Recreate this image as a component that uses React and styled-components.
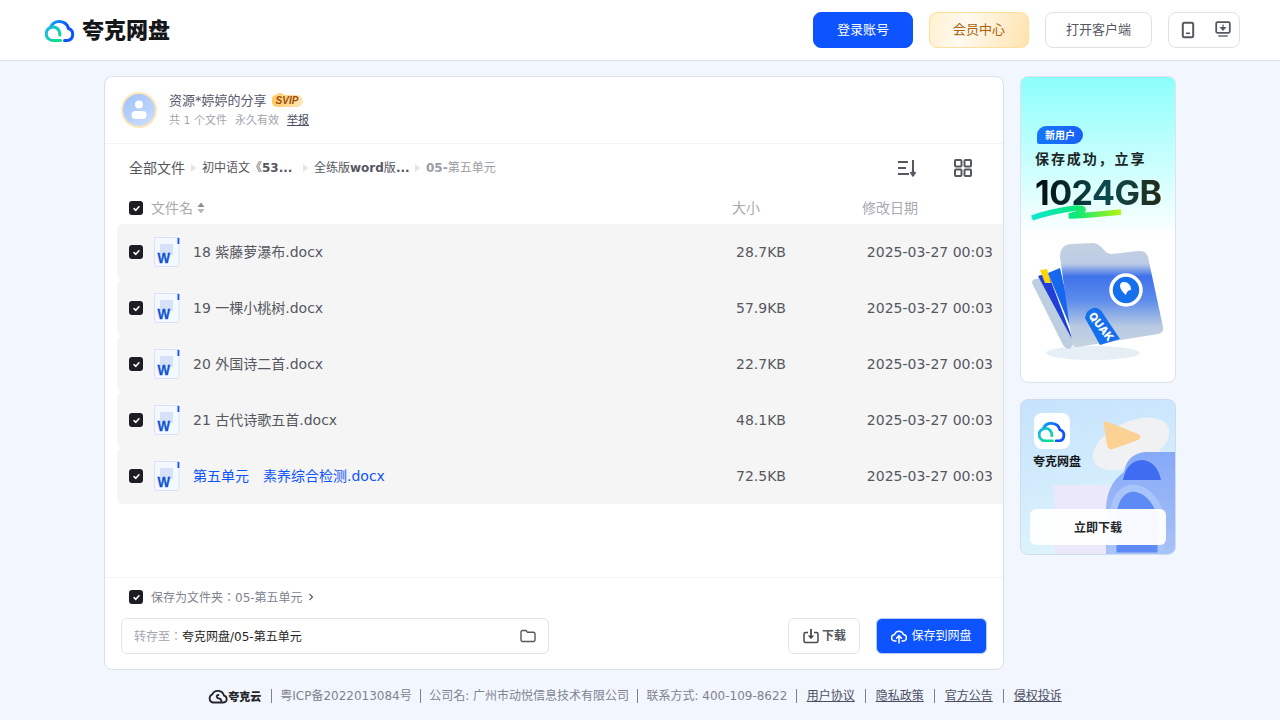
import React from 'react';
import styled, { createGlobalStyle } from 'styled-components';

const FONT = `"DejaVu Sans", "Noto Sans CJK JP", sans-serif`;

const GlobalStyle = createGlobalStyle`
    html, body {
        margin: 0;
        padding: 0;
        background: #f2f6fe;
        font-family: ${FONT};
        line-height: 20px;
    }
    * {
        box-sizing: border-box;
    }
`;

const files = [
    { id: 18, name: '18 紫藤萝瀑布.docx', size: '28.7KB' },
    { id: 19, name: '19 一棵小桃树.docx', size: '57.9KB' },
    { id: 20, name: '20 外国诗二首.docx', size: '22.7KB' },
    { id: 21, name: '21 古代诗歌五首.docx', size: '48.1KB' },
    { id: 22, name: '第五单元　素养综合检测.docx', size: '72.5KB', active: true },
];

const footerItems = ['粤ICP备2022013084号', '公司名: 广州市动悦信息技术有限公司', '联系方式: 400-109-8622'];
const footerLinks = ['用户协议', '隐私政策', '官方公告', '侵权投诉'];

const CloudLogo = ({ size = 30, id = 'a' }) => (
    <svg width={size} height={size * 0.8} viewBox="0 0 30 24" fill="none">
        <defs>
            <linearGradient id={`blue-${id}`} x1="0" y1="0" x2="1" y2="1">
                <stop offset="0" stopColor="#12a8f5" />
                <stop offset="0.45" stopColor="#0d53ff" />
                <stop offset="1" stopColor="#0d53ff" />
            </linearGradient>
            <linearGradient id={`green-${id}`} x1="0" y1="0" x2="1" y2="1">
                <stop offset="0" stopColor="#16b5f0" />
                <stop offset="1" stopColor="#0be37d" />
            </linearGradient>
        </defs>
        <path d="M5.5 9.5A9.5 9.5 0 0 1 23.5 10.5A6.2 6.2 0 0 1 22.5 22.5H19.5" stroke={`url(#blue-${id})`} strokeWidth="3" strokeLinecap="round" />
        <path d="M15.5 22.5H8A6.8 6.8 0 1 1 14.8 15.7V17" stroke={`url(#green-${id})`} strokeWidth="3" strokeLinecap="round" />
    </svg>
);

const Check = () => (
    <CheckBox>
        <svg width="7" height="7" viewBox="0 0 8 8" fill="none">
            <path d="M1.2 4.2L3.2 6.1L6.8 2" stroke="#fff" strokeWidth="1.8" strokeLinecap="round" strokeLinejoin="round" />
        </svg>
    </CheckBox>
);

const WordIcon = () => (
    <svg width="28" height="30" viewBox="0 0 28 30" fill="none">
        <path d="M1.5 0.5H26V28A1.5 1.5 0 0 1 24.5 29.5H3A1.5 1.5 0 0 1 1.5 28Z" fill="#f4f8ff" stroke="#d6e4fb" />
        <rect x="7" y="7" width="13" height="11" fill="#d5e2fa" />
        <rect x="24.5" y="1" width="1.8" height="6" fill="#0d53ff" />
        <text x="4.5" y="25.5" textLength="12.5" lengthAdjust="spacingAndGlyphs" fontFamily="Liberation Sans, sans-serif" fontWeight="700" fontSize="15" fill="#0d53d8" stroke="#0d53d8" strokeWidth="0.3">W</text>
    </svg>
);

const FolderArt = () => (
    <svg width="136" height="124" viewBox="0 0 136 124" fill="none">
        <defs>
            <linearGradient id="folderFront" x1="0" y1="0" x2="0" y2="1">
                <stop offset="0" stopColor="#c5d1e2" />
                <stop offset="0.2" stopColor="#bccce6" />
                <stop offset="0.32" stopColor="#3f72ea" />
                <stop offset="0.55" stopColor="#5d8cec" />
                <stop offset="0.8" stopColor="#b8cae2" />
                <stop offset="1" stopColor="#c6d3e0" />
            </linearGradient>
            <clipPath id="tagClip">
                <path d="M55 79Q56 71 63 69Q68 68 72 73L90 100L70 106Z" />
            </clipPath>
        </defs>
        <ellipse cx="63" cy="114" rx="47" ry="7" fill="#e6eff6" />
        <path d="M2 44Q2 40 6 40L12 38L44 104L40 110Q36 110 33 106Z" fill="#bccee0" />
        <path d="M8 37L18 34L44 104Z" fill="#1f3fd6" />
        <path d="M10 31L17 30L21 44L15 44Z" fill="#fdd50b" />
        <path d="M18 34L30 29L47 104Z" fill="#1766ee" />
        <path d="M30 18Q30 5 42 5L62 4Q68 4 72 9L76 13Q78 15 82 15L108 12Q116 11 118 18L133 88Q134 94 128 95L48 108Q43 109 42 104Z" fill="url(#folderFront)" />
        <circle cx="96" cy="51" r="15" fill="#1670ee" stroke="#fff" strokeWidth="3.5" />
        <path d="M94 43a7 7 0 0 1 7 8q-4 0-5 5q-6-5-6-9q0-4 4-4Z" fill="#fff" />
        <path d="M55 79Q56 71 63 69Q68 68 72 73L90 100L70 106Z" fill="#1670ee" />
        <g clipPath="url(#tagClip)">
            <text transform="translate(58 77) rotate(52)" fontFamily="Inter, sans-serif" fontWeight="800" fontSize="11" fill="#fff">QUAK</text>
        </g>
    </svg>
);

const DownloadArt = () => (
    <svg width="156" height="156" viewBox="0 0 156 156" fill="none">
        <defs>
            <linearGradient id="lockBlue" x1="0" y1="0" x2="0" y2="1">
                <stop offset="0" stopColor="#86a9f8" />
                <stop offset="1" stopColor="#a9c2f6" />
            </linearGradient>
        </defs>
        <rect x="33" y="85" width="70" height="71" fill="#ece8fb" />
        <ellipse cx="110" cy="44" rx="41" ry="22" fill="#f0f1f2" transform="rotate(-25 110 44)" />
        <path d="M83 26Q81 20 87 22L117 34Q122 37 117 40L92 49Q87 50 86 45Z" fill="#fbd194" />
        <path d="M85 156V108Q86 84 103 72Q106 54 124 52H156V156Z" fill="url(#lockBlue)" />
        <path d="M102 80Q106 60 122 60Q136 62 140 80Z" fill="#3f6cf0" />
        <path d="M92 156V116Q94 90 112 88Q132 90 140 116V156Z" fill="#5d8af5" stroke="#a8c4fa" strokeWidth="7" />
    </svg>
);

export default function App() {
    return (
        <Page>
            <GlobalStyle />
            <Header>
                <Logo>
                    <CloudLogo id="head" />
                    <LogoText>夸克网盘</LogoText>
                </Logo>
                <HeaderActions>
                    <HeaderButton $kind="primary">登录账号</HeaderButton>
                    <HeaderButton $kind="gold">会员中心</HeaderButton>
                    <HeaderButton $wide>打开客户端</HeaderButton>
                    <DeviceGroup>
                        <svg width="14" height="18" viewBox="0 0 14 18" fill="none">
                            <rect x="1.8" y="1.8" width="10.4" height="14.4" rx="1.5" stroke="#55585f" strokeWidth="2" />
                            <rect x="5" y="11.5" width="4" height="1.6" fill="#55585f" />
                        </svg>
                        <svg width="16" height="18" viewBox="0 0 16 18" fill="none">
                            <rect x="1.2" y="1.2" width="13.6" height="10.6" rx="1.2" stroke="#55585f" strokeWidth="1.8" />
                            <path d="M8 3.5V7.5M5.8 6.5H10.2L8 9Z" stroke="#55585f" strokeWidth="1.2" fill="#55585f" />
                            <rect x="3" y="14" width="10" height="2" rx="1" fill="#8d9096" />
                        </svg>
                    </DeviceGroup>
                </HeaderActions>
            </Header>

            <Main>
                <Card>
                    <ShareInfo>
                        <Avatar>
                            <svg width="20" height="20" viewBox="0 0 20 20" fill="#fff">
                                <circle cx="10" cy="4.5" r="4" />
                                <rect x="2.5" y="11" width="15" height="8" rx="4" />
                            </svg>
                        </Avatar>
                        <ShareText>
                            <ShareName>
                                资源*婷婷的分享
                                <SvipBadge>SVIP</SvipBadge>
                            </ShareName>
                            <ShareMeta>
                                <span>共 1 个文件</span>
                                <span>永久有效</span>
                                <ReportLink>举报</ReportLink>
                            </ShareMeta>
                        </ShareText>
                    </ShareInfo>

                    <CrumbBar>
                        <Crumbs>
                            <CrumbRoot>全部文件</CrumbRoot>
                            <CrumbArrow />
                            <Crumb $width={95}>初中语文《<b>53...</b></Crumb>
                            <CrumbArrow />
                            <Crumb $width={95}>全练版<b>word</b>版<b>...</b></Crumb>
                            <CrumbArrow />
                            <Crumb $current><b>05-</b>第五单元</Crumb>
                        </Crumbs>
                        <ViewTools>
                            <svg width="20" height="18" viewBox="0 0 20 18" fill="none">
                                <path d="M1 3H11M1 9H9M1 15H12" stroke="#55585f" strokeWidth="2" />
                                <path d="M16 1V15M13.5 13L16 16.5L18.5 13" stroke="#55585f" strokeWidth="2" />
                            </svg>
                            <svg width="18" height="18" viewBox="0 0 18 18" fill="none" stroke="#55585f" strokeWidth="2">
                                <rect x="1" y="1" width="6.5" height="6.5" rx="1" />
                                <rect x="10.5" y="1" width="6.5" height="6.5" rx="1" />
                                <rect x="1" y="10.5" width="6.5" height="6.5" rx="1" />
                                <rect x="10.5" y="10.5" width="6.5" height="6.5" rx="1" />
                            </svg>
                        </ViewTools>
                    </CrumbBar>

                    <ListHead>
                        <HeadName>
                            <Check />
                            <span>文件名</span>
                            <svg width="8" height="12" viewBox="0 0 8 12" fill="#8b8e95">
                                <path d="M4 0.5L7.5 5H0.5Z" />
                                <path d="M4 11.5L7.5 7H0.5Z" fill="#b5b7bc" />
                            </svg>
                        </HeadName>
                        <span>大小</span>
                        <span>修改日期</span>
                    </ListHead>

                    <FileList>
                        {files.map((file) => (
                            <FileRow key={file.id}>
                                <FileName $active={file.active}>
                                    <Check />
                                    <WordIcon />
                                    <span>{file.name}</span>
                                </FileName>
                                <span>{file.size}</span>
                                <FileDate>2025-03-27 00:03</FileDate>
                            </FileRow>
                        ))}
                    </FileList>

                    <SaveArea>
                        <SaveOption>
                            <Check />
                            <SaveOptionText>保存为文件夹：05-第五单元</SaveOptionText>
                            <svg width="6" height="8" viewBox="0 0 6 8" fill="none">
                                <path d="M1.5 1L4.5 4L1.5 7" stroke="#55585f" strokeWidth="1.1" />
                            </svg>
                        </SaveOption>
                        <SaveRow>
                            <PathBox>
                                <PathText>
                                    <PathLabel>转存至：</PathLabel>夸克网盘/05-第五单元
                                </PathText>
                                <svg width="16" height="14" viewBox="0 0 16 14" fill="none">
                                    <path d="M1 3A1.5 1.5 0 0 1 2.5 1.5H6L7.5 3.2H13.5A1.5 1.5 0 0 1 15 4.7V11A1.5 1.5 0 0 1 13.5 12.5H2.5A1.5 1.5 0 0 1 1 11Z" stroke="#55585f" strokeWidth="1.4" />
                                </svg>
                            </PathBox>
                            <SaveButtons>
                                <DownloadButton>
                                    <svg width="16" height="16" viewBox="0 0 16 16" fill="none">
                                        <path d="M5 4.5H2.5A1.5 1.5 0 0 0 1 6V13A1.5 1.5 0 0 0 2.5 14.5H13.5A1.5 1.5 0 0 0 15 13V6A1.5 1.5 0 0 0 13.5 4.5H11" stroke="#44474d" strokeWidth="1.5" />
                                        <path d="M8 1V8" stroke="#44474d" strokeWidth="1.8" />
                                        <path d="M4.8 7.5H11.2L8 11.2Z" fill="#44474d" />
                                    </svg>
                                    下载
                                </DownloadButton>
                                <SaveButton>
                                    <svg width="16" height="16" viewBox="0 0 16 16" fill="none" stroke="#fff" strokeWidth="1.5" strokeLinecap="round" strokeLinejoin="round">
                                        <path d="M5 13H4A3.2 3.2 0 0 1 3.6 6.6A4.6 4.6 0 0 1 12.4 6.6A3.2 3.2 0 0 1 12 13H11" />
                                        <path d="M8 15V8M5.5 10.2L8 7.6L10.5 10.2" />
                                    </svg>
                                    保存到网盘
                                </SaveButton>
                            </SaveButtons>
                        </SaveRow>
                    </SaveArea>
                </Card>

                <Sidebar>
                    <PromoCard>
                        <NewUserTag>新用户</NewUserTag>
                        <PromoLine>保存成功，立享</PromoLine>
                        <PromoSize>1024GB</PromoSize>
                        <PromoStroke viewBox="0 0 92 18" width="92" height="18" fill="none">
                            <path d="M1 15Q18 9 38 6Q50 4 52 6Q54 9 38 13Q50 13 90 9" stroke="url(#strokeGreen)" strokeWidth="5.5" />
                            <defs>
                                <linearGradient id="strokeGreen" x1="0" y1="0" x2="1" y2="0">
                                    <stop offset="0" stopColor="#0fe6d2" />
                                    <stop offset="0.5" stopColor="#0de878" />
                                    <stop offset="1" stopColor="#b6f50f" />
                                </linearGradient>
                            </defs>
                        </PromoStroke>
                        <PromoArt>
                            <FolderArt />
                        </PromoArt>
                    </PromoCard>
                    <AppCard>
                        <AppArt>
                            <DownloadArt />
                        </AppArt>
                        <AppIcon>
                            <CloudLogo size={28} id="app" />
                        </AppIcon>
                        <AppName>夸克网盘</AppName>
                        <AppDownload>立即下载</AppDownload>
                    </AppCard>
                </Sidebar>
            </Main>

            <Footer>
                <FooterBrand>
                    <svg width="20" height="16" viewBox="0 0 20 16" fill="none" stroke="#24262b" strokeWidth="1.8">
                        <path d="M13 14.5H15.5A3.5 3.5 0 0 0 16 7.6A6.3 6.3 0 0 0 4.2 6.5A4.2 4.2 0 0 0 5 14.5H12C14 14.5 14 11 11 10.5C8 10 8 7 10.5 7" strokeLinecap="round" />
                    </svg>
                    夸克云
                </FooterBrand>
                {footerItems.map((item) => (
                    <FooterText key={item}>{item}</FooterText>
                ))}
                {footerLinks.map((item) => (
                    <FooterLink key={item}>{item}</FooterLink>
                ))}
            </Footer>
        </Page>
    );
}

const Page = styled.div`
    width: 1280px;
    height: 720px;
    overflow: hidden;
    background: #f2f6fe;
`;

const Header = styled.header`
    height: 61px;
    padding: 0 40px 0 45px;
    display: flex;
    align-items: center;
    justify-content: space-between;
    background: #fff;
    border-bottom: 1px solid #dfe2ea;
`;

const Logo = styled.div`
    display: flex;
    align-items: center;
    gap: 8px;
`;

const LogoText = styled.span`
    font-family: "Noto Sans CJK SC", sans-serif;
    font-size: 22px;
    line-height: 24px;
    font-weight: 900;
    color: #14161a;
    margin: 0 0 4px -1px;
`;

const HeaderActions = styled.div`
    display: flex;
    align-items: center;
    gap: 16px;
`;

const HeaderButton = styled.button`
    width: ${(p) => (p.$wide ? '107px' : '100px')};
    height: 36px;
    padding: 0;
    border-radius: 8px;
    font-family: ${FONT};
    font-size: 13px;
    line-height: 20px;
    border: 1px solid ${(p) => (p.$kind === 'primary' ? '#0d53ff' : p.$kind === 'gold' ? '#ffdf9c' : '#dfe1e6')};
    color: ${(p) => (p.$kind === 'primary' ? '#fff' : p.$kind === 'gold' ? '#a8600c' : '#55585f')};
    background: ${(p) =>
        p.$kind === 'primary'
            ? '#0d53ff'
            : p.$kind === 'gold'
            ? 'linear-gradient(105deg, #fff1cf 0%, #fffaf0 35%, #ffe3ae 100%)'
            : '#fff'};
`;

const DeviceGroup = styled.div`
    width: 72px;
    height: 36px;
    padding: 0 8px 0 12px;
    display: flex;
    align-items: center;
    justify-content: space-between;
    border: 1px solid #dfe1e6;
    border-radius: 8px;
`;

const Main = styled.main`
    width: 1072px;
    margin: 15px auto 0;
    display: flex;
    align-items: flex-start;
    gap: 16px;
`;

const Card = styled.section`
    width: 900px;
    height: 594px;
    display: flex;
    flex-direction: column;
    overflow: hidden;
    background: #fff;
    border: 1px solid #dcdfe7;
    border-radius: 8px;
`;

const ShareInfo = styled.div`
    height: 67px;
    padding: 0 16px;
    display: flex;
    align-items: center;
    gap: 12px;
    border-bottom: 1px solid #f3f4f6;
`;

const Avatar = styled.div`
    width: 36px;
    height: 36px;
    display: flex;
    align-items: center;
    justify-content: center;
    border-radius: 50%;
    border: 2px solid #fde7b8;
    background: linear-gradient(145deg, #9dc1fb, #cfdffd);
`;

const ShareText = styled.div`
    display: flex;
    flex-direction: column;
    gap: 3px;
`;

const ShareName = styled.div`
    display: flex;
    align-items: center;
    gap: 4px;
    font-size: 13px;
    line-height: 18px;
    color: #55586a;
`;

const SvipBadge = styled.i`
    position: relative;
    isolation: isolate;
    width: 31px;
    height: 12px;
    margin-left: 1px;
    display: flex;
    align-items: center;
    justify-content: center;
    border-radius: 4px 6px 6px 5px;
    background: linear-gradient(100deg, #ffc766, #ffe9b8);
    font-family: "Liberation Sans", sans-serif;
    font-size: 10px;
    font-weight: 700;
    color: #9d4f0a;
    &::before {
        content: "";
        position: absolute;
        left: 3px;
        top: -2px;
        width: 10px;
        height: 5px;
        border-radius: 5px 5px 0 0;
        background: #ffd27f;
        z-index: -1;
    }
`;

const ShareMeta = styled.div`
    display: flex;
    align-items: center;
    gap: 8px;
    font-size: 11px;
    line-height: 16px;
    color: #a3a5ae;
`;

const ReportLink = styled.a`
    color: #4b4e63;
    text-decoration: underline;
`;

const CrumbBar = styled.div`
    height: 48px;
    padding: 0 31px 0 24px;
    display: flex;
    align-items: center;
    justify-content: space-between;
`;

const Crumbs = styled.div`
    display: flex;
    align-items: center;
`;

const CrumbRoot = styled.span`
    font-size: 14px;
    color: #55585f;
`;

const CrumbArrow = styled.i`
    width: 0;
    height: 0;
    margin: 0 6px;
    border-left: 5px solid #e3e4e7;
    border-top: 4px solid transparent;
    border-bottom: 4px solid transparent;
`;

const Crumb = styled.span`
    width: ${(p) => (p.$width ? `${p.$width}px` : 'auto')};
    white-space: nowrap;
    font-size: 12px;
    color: ${(p) => (p.$current ? '#9a9ca3' : '#55585f')};
`;

const ViewTools = styled.div`
    display: flex;
    align-items: center;
    gap: 37px;
`;

const ListHead = styled.div`
    height: 32px;
    padding-left: 24px;
    display: grid;
    grid-template-columns: 1fr 130px 141px;
    align-items: center;
    font-size: 14px;
    color: #a8aaaf;
`;

const HeadName = styled.div`
    display: flex;
    align-items: center;
    gap: 8px;
    & > svg {
        margin-left: -4px;
    }
`;

const CheckBox = styled.span`
    width: 14px;
    height: 14px;
    flex: none;
    display: inline-flex;
    align-items: center;
    justify-content: center;
    border-radius: 3px;
    background: #1d1e24;
`;

const FileList = styled.div`
    flex: 1;
    margin-left: 12px;
`;

const FileRow = styled.div`
    height: 56px;
    padding: 0 10px 0 12px;
    display: grid;
    grid-template-columns: 1fr 130px 127px;
    align-items: center;
    background: #f5f5f6;
    border-radius: 6px 0 0 6px;
    font-size: 14px;
    color: #55585f;
`;

const FileName = styled.div`
    display: flex;
    align-items: center;
    color: ${(p) => (p.$active ? '#0d53ff' : '#55585f')};
    & > svg {
        margin: 0 12px 0 10px;
    }
`;

const FileDate = styled.span`
    text-align: right;
    white-space: nowrap;
`;

const SaveArea = styled.div`
    height: 92px;
    padding: 10px 16px 0;
    border-top: 1px solid #f3f4f6;
`;

const SaveOption = styled.div`
    height: 18px;
    padding-left: 8px;
    display: flex;
    align-items: center;
    gap: 8px;
    font-size: 12px;
    color: #80838f;
    & > svg {
        margin-left: -3px;
    }
`;

const SaveOptionText = styled.span`
    padding-top: 2px;
`;

const SaveRow = styled.div`
    margin-top: 12px;
    display: flex;
    align-items: center;
    justify-content: space-between;
`;

const PathBox = styled.div`
    width: 428px;
    height: 36px;
    padding: 0 12px;
    display: flex;
    align-items: center;
    justify-content: space-between;
    border: 1px solid #e3e5ea;
    border-radius: 6px;
    font-size: 12px;
    color: #1d1e24;
`;

const PathText = styled.span`
    padding-top: 2px;
`;

const PathLabel = styled.span`
    color: #a3a5ae;
`;

const SaveButtons = styled.div`
    display: flex;
    gap: 16px;
`;

const DownloadButton = styled.button`
    width: 72px;
    height: 36px;
    padding: 0 0 0 1px;
    display: flex;
    align-items: center;
    justify-content: center;
    gap: 3px;
    background: #fff;
    border: 1px solid #e3e5ea;
    border-radius: 6px;
    font-family: ${FONT};
    font-size: 12px;
    line-height: 20px;
    font-weight: 700;
    color: #55585f;
`;

const SaveButton = styled.button`
    width: 111px;
    height: 36px;
    padding: 0;
    display: flex;
    align-items: center;
    justify-content: center;
    gap: 4px;
    background: #0d53ff;
    border: 1px solid #b5c9f5;
    border-radius: 6px;
    font-family: ${FONT};
    font-size: 12px;
    line-height: 20px;
    color: #fff;
`;

const Sidebar = styled.aside`
    width: 156px;
    display: flex;
    flex-direction: column;
    gap: 16px;
`;

const PromoCard = styled.div`
    height: 307px;
    padding: 49px 0 0 14px;
    display: flex;
    flex-direction: column;
    overflow: hidden;
    border: 1px solid #dfe2ea;
    border-radius: 8px;
    background: linear-gradient(180deg, #8bfffb 0%, #f2fffe 47%, #fff 52%);
`;

const NewUserTag = styled.span`
    width: 46px;
    height: 18px;
    margin-left: 2px;
    display: flex;
    align-items: center;
    justify-content: center;
    border-radius: 9px 9px 9px 2px;
    background: linear-gradient(90deg, #1477fb, #1a5ff6);
    font-family: "Noto Sans CJK SC", sans-serif;
    font-size: 10px;
    font-weight: 700;
    color: #fff;
`;

const PromoLine = styled.div`
    margin-top: 4px;
    font-family: "Noto Sans CJK SC", sans-serif;
    font-size: 14px;
    line-height: 20px;
    font-weight: 700;
    letter-spacing: 1.9px;
    color: #1d2529;
`;

const PromoSize = styled.div`
    margin-top: 7px;
    font-family: Inter, sans-serif;
    font-size: 34px;
    line-height: 36px;
    font-weight: 700;
    letter-spacing: -0.5px;
    background: linear-gradient(90deg, #050d0d 0%, #0b4a50 50%, #2a2309 100%);
    -webkit-background-clip: text;
    background-clip: text;
    color: transparent;
`;

const PromoStroke = styled.svg`
    margin: -8px 0 0 -4px;
    flex: none;
`;

const PromoArt = styled.div`
    margin: 18px 0 0 -5px;
`;

const AppCard = styled.div`
    position: relative;
    height: 156px;
    padding: 13px 0 0 13px;
    overflow: hidden;
    border: 1px solid #cfdcee;
    border-radius: 8px;
    background: linear-gradient(165deg, #c5e2fd 0%, #e2f7fb 100%);
`;

const AppArt = styled.div`
    position: absolute;
    left: 0;
    top: 0;
`;

const AppIcon = styled.div`
    position: relative;
    width: 36px;
    height: 36px;
    display: flex;
    align-items: center;
    justify-content: center;
    background: #fff;
    border-radius: 8px;
`;

const AppName = styled.div`
    position: relative;
    margin: 3px 0 0 -1px;
    font-family: "Noto Sans CJK SC", sans-serif;
    font-size: 12px;
    line-height: 18px;
    font-weight: 700;
    color: #14161a;
`;

const AppDownload = styled.div`
    position: absolute;
    left: 9px;
    bottom: 9px;
    width: 136px;
    height: 36px;
    display: flex;
    align-items: center;
    justify-content: center;
    background: rgba(255, 255, 255, 0.95);
    border-radius: 6px;
    font-family: "Noto Sans CJK SC", sans-serif;
    font-size: 12px;
    font-weight: 700;
    color: #24262b;
`;

const Footer = styled.footer`
    margin-top: 18px;
    display: flex;
    align-items: center;
    justify-content: center;
    font-size: 12px;
    line-height: 14px;
    color: #80838f;
`;

const FooterBrand = styled.div`
    padding-right: 10px;
    display: flex;
    align-items: center;
    gap: 0;
    font-family: "Noto Sans CJK SC", sans-serif;
    font-size: 11px;
    font-weight: 900;
    color: #24262b;
`;

const FooterText = styled.span`
    padding: 0 8.4px 0 8px;
    border-left: 1px solid #80838f;
    white-space: nowrap;
`;

const FooterLink = styled.a`
    position: relative;
    margin-left: 11px;
    margin-right: 10px;
    color: #4b4e63;
    text-decoration: underline;
    white-space: nowrap;
    &::before {
        content: "";
        position: absolute;
        left: -11px;
        top: 0;
        height: 14px;
        border-left: 1px solid #80838f;
    }
`;
